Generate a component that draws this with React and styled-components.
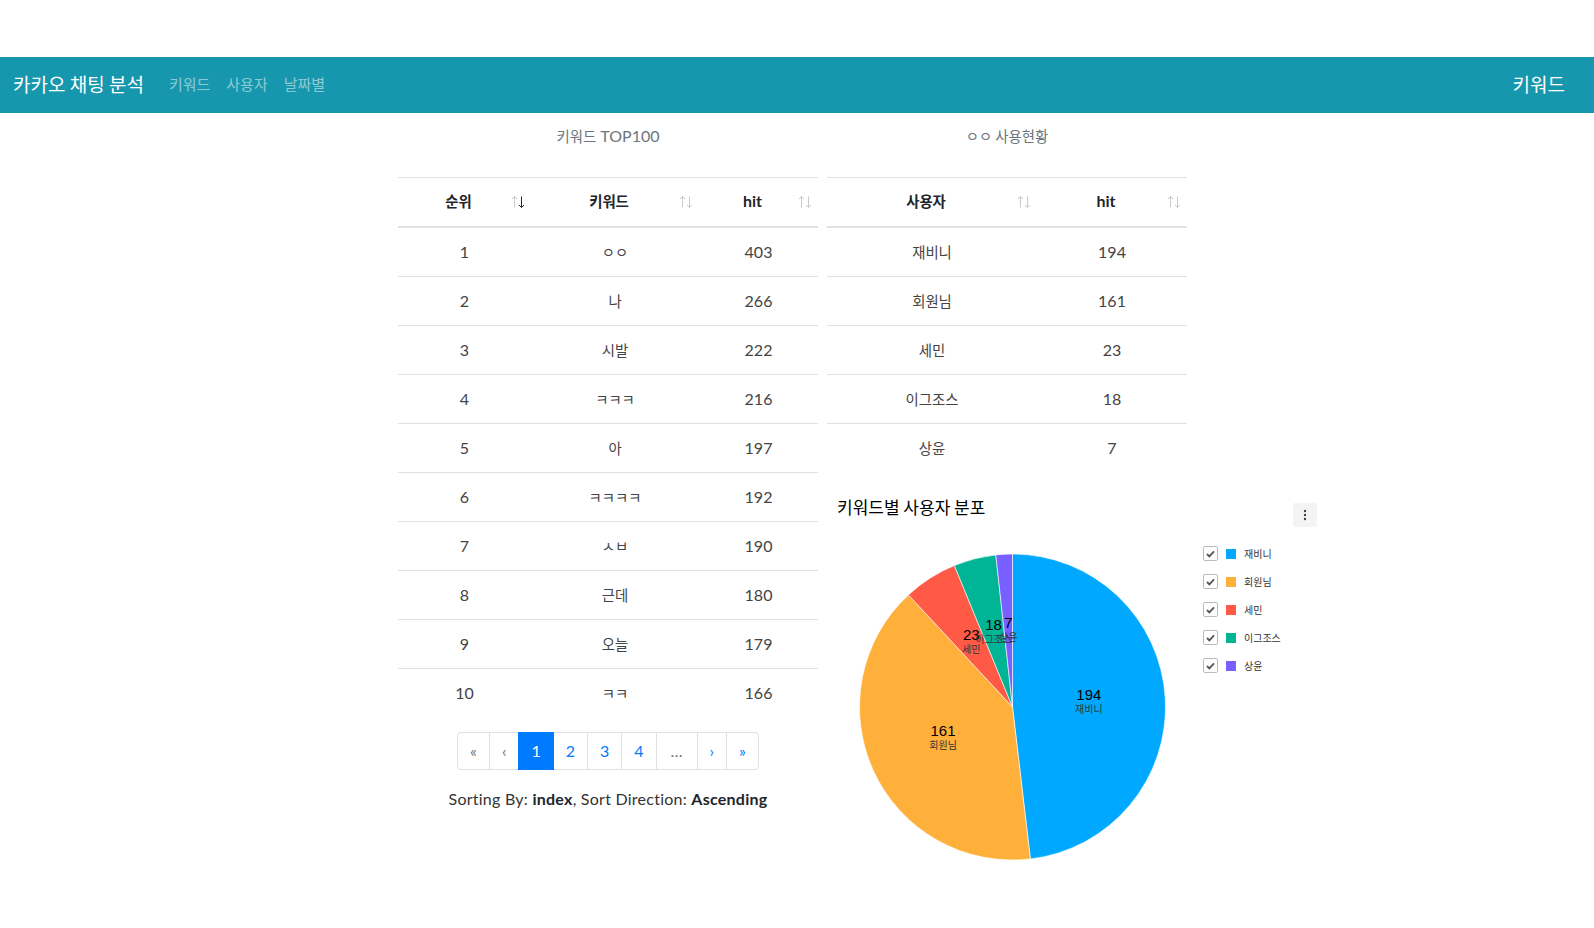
import React from "react";
import styled, { createGlobalStyle } from "styled-components";

const keywords = [
  { rank: 1, word: "ㅇㅇ", hit: 403 },
  { rank: 2, word: "나", hit: 266 },
  { rank: 3, word: "시발", hit: 222 },
  { rank: 4, word: "ㅋㅋㅋ", hit: 216 },
  { rank: 5, word: "아", hit: 197 },
  { rank: 6, word: "ㅋㅋㅋㅋ", hit: 192 },
  { rank: 7, word: "ㅅㅂ", hit: 190 },
  { rank: 8, word: "근데", hit: 180 },
  { rank: 9, word: "오늘", hit: 179 },
  { rank: 10, word: "ㅋㅋ", hit: 166 }
];

const users = [
  { name: "재비니", hit: 194, color: "#00a9ff" },
  { name: "회원님", hit: 161, color: "#ffb03b" },
  { name: "세민", hit: 23, color: "#ff5a46" },
  { name: "이그조스", hit: 18, color: "#00b496" },
  { name: "상윤", hit: 7, color: "#785fff" }
];

const GlobalStyle = createGlobalStyle`
  body {
    margin: 0;
    background: #fff;
    font-family: Lato, "Noto Sans CJK KR", sans-serif;
    color: #212529;
  }
`;

function SortIcon({ active }) {
  return (
    <SortMark width="14" height="13" viewBox="0 0 14 13">
      <g fill="none" strokeWidth="1" stroke="#9aa0a6">
        <g opacity={0.55}>
          <line x1="3.5" y1="1" x2="3.5" y2="12" />
          <polyline points="1,3.5 3.5,1 6,3.5" />
        </g>
        <g opacity={active ? 1 : 0.55} stroke={active ? "#212529" : "#9aa0a6"}>
          <line x1="10.5" y1="1" x2="10.5" y2="12" />
          <polyline points="8,9.5 10.5,12 13,9.5" />
        </g>
      </g>
    </SortMark>
  );
}

function polar(cx, cy, r, deg) {
  const rad = (deg * Math.PI) / 180;
  return [cx + r * Math.sin(rad), cy - r * Math.cos(rad)];
}

function PieChart() {
  const cx = 175.5;
  const cy = 168;
  const r = 153;
  const total = users.reduce((s, u) => s + u.hit, 0);
  let start = 0;

  const slices = users.map(u => {
    const sweep = (u.hit / total) * 360;
    const end = start + sweep;
    const [x0, y0] = polar(cx, cy, r, start);
    const [x1, y1] = polar(cx, cy, r, end);
    const [lx, ly] = polar(cx, cy, r / 2, start + sweep / 2);
    const large = sweep > 180 ? 1 : 0;
    const d = `M${cx},${cy} L${x0},${y0} A${r},${r} 0 ${large} 1 ${x1},${y1} Z`;
    start = end;
    return { ...u, d, lx, ly };
  });

  return (
    <PieSvg width="351" height="336" viewBox="0 0 351 336">
      {slices.map(s => (
        <path key={s.name} d={s.d} fill={s.color} stroke="#fff" strokeWidth="1" strokeOpacity="0.6" />
      ))}
      {slices.map(s => (
        <g key={s.name + "-label"} textAnchor="middle">
          <text x={s.lx} y={s.ly - 3} fontSize="15" fontFamily="'Liberation Sans', Arial, sans-serif" fill="#000">
            {s.hit}
          </text>
          <text x={s.lx} y={s.ly + 10} fontSize="10" fontFamily="'Noto Sans CJK KR', sans-serif" fill="#333">
            {s.name}
          </text>
        </g>
      ))}
    </PieSvg>
  );
}

function App() {
  return (
    <>
      <GlobalStyle />
      <NavBar>
        <Brand>카카오 채팅 분석</Brand>
        <NavLinks>
          <NavLink>키워드</NavLink>
          <NavLink>사용자</NavLink>
          <NavLink>날짜별</NavLink>
        </NavLinks>
        <NavCurrent>키워드</NavCurrent>
      </NavBar>

      <Main>
        <LeftColumn>
          <Title><Ko>키워드</Ko> TOP100</Title>
          <Table>
            <thead>
              <tr>
                <Th $w={133}><Ko>순위</Ko><SortIcon active /></Th>
                <Th $w={168}><Ko>키워드</Ko><SortIcon /></Th>
                <Th $w={119}>hit<SortIcon /></Th>
              </tr>
            </thead>
            <tbody>
              {keywords.map(k => (
                <tr key={k.rank}>
                  <Td>{k.rank}</Td>
                  <Td><Ko>{k.word}</Ko></Td>
                  <Td>{k.hit}</Td>
                </tr>
              ))}
            </tbody>
          </Table>
          <Pagination>
            <PageCell $muted>«</PageCell>
            <PageCell $muted>‹</PageCell>
            <PageCell $active>1</PageCell>
            <PageCell>2</PageCell>
            <PageCell>3</PageCell>
            <PageCell>4</PageCell>
            <PageCell $muted $pad={14}>…</PageCell>
            <PageCell>›</PageCell>
            <PageCell>»</PageCell>
          </Pagination>
          <SortInfo>
            Sorting By: <b>index</b>, Sort Direction: <b>Ascending</b>
          </SortInfo>
        </LeftColumn>

        <RightColumn>
          <Title><Ko>ㅇㅇ 사용현황</Ko></Title>
          <Table>
            <thead>
              <tr>
                <Th $w={210}><Ko>사용자</Ko><SortIcon /></Th>
                <Th $w={150}>hit<SortIcon /></Th>
              </tr>
            </thead>
            <tbody>
              {users.map(u => (
                <tr key={u.name}>
                  <Td><Ko>{u.name}</Ko></Td>
                  <Td>{u.hit}</Td>
                </tr>
              ))}
            </tbody>
          </Table>

          <ChartBox>
            <ChartHeader>
              <ChartTitle>키워드별 사용자 분포</ChartTitle>
              <MenuButton>
                <svg width="4" height="12" viewBox="0 0 4 12">
                  <circle cx="2" cy="2" r="1.2" fill="#444" />
                  <circle cx="2" cy="6" r="1.2" fill="#444" />
                  <circle cx="2" cy="10" r="1.2" fill="#444" />
                </svg>
              </MenuButton>
            </ChartHeader>
            <ChartBody>
              <PieChart />
              <Legend>
                {users.map(u => (
                  <LegendItem key={u.name}>
                    <CheckBox>
                      <svg width="9" height="8" viewBox="0 0 9 8">
                        <polyline points="1,4 3.4,6.4 8,1.4" fill="none" stroke="#555" strokeWidth="1.8" />
                      </svg>
                    </CheckBox>
                    <Swatch $color={u.color} />
                    <LegendLabel>{u.name}</LegendLabel>
                  </LegendItem>
                ))}
              </Legend>
            </ChartBody>
          </ChartBox>
        </RightColumn>
      </Main>
    </>
  );
}

const NavBar = styled.nav`
  box-sizing: border-box;
  margin-top: 57px;
  height: 56px;
  display: flex;
  align-items: center;
  padding: 0 29px 4px 13px;
  background: #1797ad;
  font-family: "Noto Sans CJK KR", sans-serif;
`;

const Brand = styled.div`
  font-size: 19px;
  color: #fff;
  margin-right: 17px;
  white-space: nowrap;
`;

const NavLinks = styled.div`
  display: flex;
  flex: 1;
`;

const NavLink = styled.a`
  font-size: 15px;
  padding: 0 8px;
  color: rgba(255, 255, 255, 0.5);
  cursor: pointer;
`;

const NavCurrent = styled.div`
  font-size: 19px;
  color: #fff;
`;

const Main = styled.main`
  display: flex;
  justify-content: center;
  gap: 9px;
  padding-right: 9px;
`;

const LeftColumn = styled.section`
  width: 420px;
  flex-shrink: 0;
  display: flex;
  flex-direction: column;
  align-items: center;
`;

const RightColumn = styled.section`
  width: 360px;
  flex-shrink: 0;
`;

const Ko = styled.span`
  font-family: "Noto Sans CJK KR", sans-serif;
  font-size: 0.9em;
  line-height: 1;
`;

const Title = styled.div`
  width: 100%;
  text-align: center;
  font-size: 16px;
  line-height: 24px;
  color: #6c757d;
  padding: 11px 0 29px;
`;

const Table = styled.table`
  width: 100%;
  table-layout: fixed;
  border-collapse: collapse;
  font-size: 16px;
  line-height: 24px;
`;

const Th = styled.th`
  position: relative;
  box-sizing: border-box;
  width: ${p => p.$w}px;
  padding: 11px 24px 13px 12px;
  border-top: 1px solid #dee2e6;
  border-bottom: 2px solid #dee2e6;
  text-align: center;
  font-weight: 700;
  color: #212529;
`;

const SortMark = styled.svg`
  position: absolute;
  right: 6px;
  top: 50%;
  transform: translateY(-50%);
`;

const Td = styled.td`
  padding: 12px;
  border-top: 1px solid #dee2e6;
  text-align: center;
  color: #444;
`;

const Pagination = styled.ul`
  display: flex;
  list-style: none;
  margin: 15px 0 0;
  padding: 0;
  border-radius: 4px;
`;

const PageCell = styled.li`
  padding: 8px ${p => p.$pad || 12}px;
  line-height: 20px;
  font-size: 16px;
  margin-left: -1px;
  border: 1px solid ${p => (p.$active ? "#007bff" : "#dee2e6")};
  background: ${p => (p.$active ? "#007bff" : "#fff")};
  color: ${p => (p.$active ? "#fff" : p.$muted ? "#6c757d" : "#007bff")};
  position: relative;
  z-index: ${p => (p.$active ? 1 : 0)};

  &:first-child {
    margin-left: 0;
    border-radius: 4px 0 0 4px;
  }

  &:last-child {
    border-radius: 0 4px 4px 0;
  }
`;

const SortInfo = styled.p`
  margin: 17px 0 0;
  font-size: 16px;
  line-height: 24px;
  letter-spacing: 0.25px;
  color: #333;

  b {
    color: #212529;
  }
`;

const ChartBox = styled.div`
  width: 500px;
  margin-top: 13px;
  padding: 10px;
  box-sizing: border-box;
`;

const ChartHeader = styled.div`
  height: 44px;
  display: flex;
  justify-content: space-between;
  align-items: flex-start;
`;

const ChartTitle = styled.div`
  font-family: "Noto Sans CJK KR", sans-serif;
  font-size: 17px;
  line-height: 24px;
  color: #000;
`;

const MenuButton = styled.button`
  margin-top: 8px;
  width: 24px;
  height: 24px;
  padding: 0;
  border: none;
  border-radius: 2px;
  background: #f4f4f4;
  display: flex;
  align-items: center;
  justify-content: center;
`;

const ChartBody = styled.div`
  display: flex;
  align-items: flex-start;
`;

const PieSvg = styled.svg`
  display: block;
  flex-shrink: 0;
`;

const Legend = styled.ul`
  list-style: none;
  margin: 7px 0 0 15px;
  padding: 0;
  display: flex;
  flex-direction: column;
  gap: 13px;
`;

const LegendItem = styled.li`
  display: flex;
  align-items: center;
  height: 15px;
`;

const CheckBox = styled.span`
  width: 13px;
  height: 13px;
  border: 1px solid #bbb;
  border-radius: 2px;
  display: flex;
  align-items: center;
  justify-content: center;
  margin-right: 8px;
`;

const Swatch = styled.span`
  width: 10px;
  height: 10px;
  background: ${p => p.$color};
  margin-right: 8px;
`;

const LegendLabel = styled.span`
  font-family: "Noto Sans CJK KR", sans-serif;
  font-size: 10px;
  color: #333;
`;

export default App;
